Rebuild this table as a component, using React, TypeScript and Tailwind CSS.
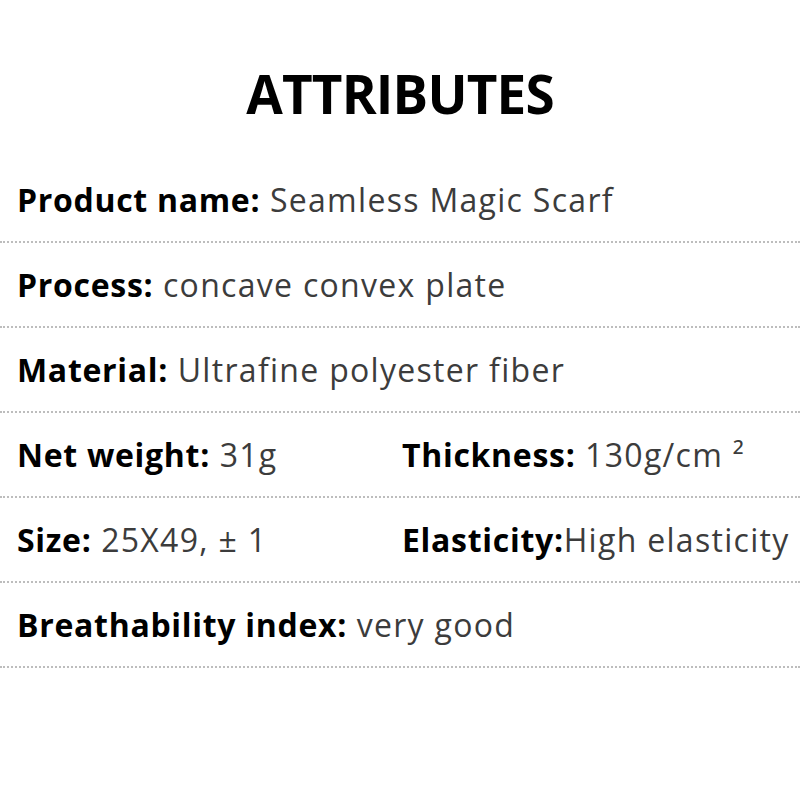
import React from 'react';

type Attr = { label: string; value: string };

const rows: Attr[][] = [
    [{ label: 'Product name:', value: ' Seamless Magic Scarf' }],
    [{ label: 'Process:', value: ' concave convex plate' }],
    [{ label: 'Material:', value: ' Ultrafine polyester fiber' }],
    [
        { label: 'Net weight:', value: ' 31g' },
        { label: 'Thickness:', value: ' 130g/cm ²' },
    ],
    [
        { label: 'Size:', value: ' 25X49, ± 1' },
        { label: 'Elasticity:', value: 'High elasticity' },
    ],
    [{ label: 'Breathability index:', value: ' very good' }],
];

const Cell = ({ label, value }: Attr) => (
    <span className="whitespace-pre">
        <span className="font-bold text-black tracking-[0.7px]">{label}</span>
        <span className="text-[#3c3c3c] tracking-[1.3px]">{value}</span>
    </span>
);

export default function App() {
    return (
        <div className="w-[800px] h-[800px] bg-white font-['Open_Sans',sans-serif]">
            <header className="h-[158px] flex items-center justify-center pt-[30px]">
                <h1 className="text-[53px] font-bold text-black tracking-[-0.8px]">ATTRIBUTES</h1>
            </header>

            <div>
                {rows.map((row, i) => (
                    <div
                        key={i}
                        className="h-[85px] flex items-center pl-[17px] text-[32px] border-b-2 border-dotted border-[#bdbdbd]"
                    >
                        {row.length === 1 ? (
                            <Cell {...row[0]} />
                        ) : (
                            <>
                                <div className="w-[385px]">
                                    <Cell {...row[0]} />
                                </div>
                                <Cell {...row[1]} />
                            </>
                        )}
                    </div>
                ))}
            </div>
        </div>
    );
}
